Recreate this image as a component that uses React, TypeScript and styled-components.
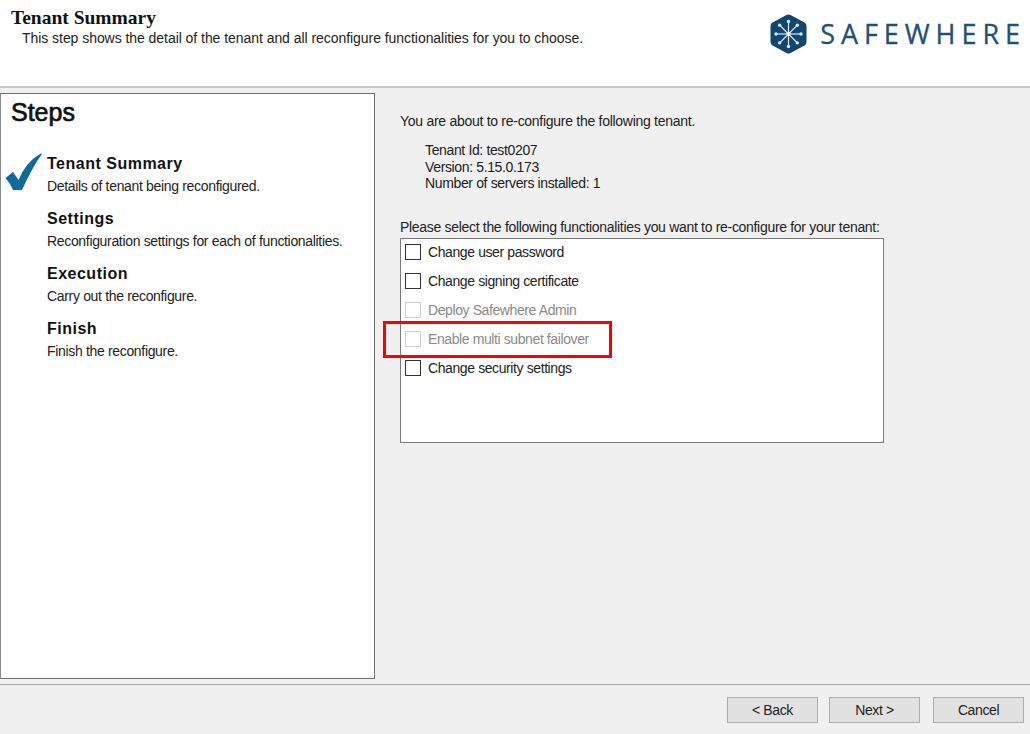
import React from "react";
import styled, { createGlobalStyle } from "styled-components";

const Global = createGlobalStyle`
  html, body { margin: 0; padding: 0; background: #f0f0f0; }
  body { font-family: "Liberation Sans", Arial, sans-serif; color: #1a1a1a; }
`;
const Page = styled.div`
  width: 1030px; height: 734px; display: flex; flex-direction: column; overflow: hidden; background: #f0f0f0;
`;
const Header = styled.header`
  height: 88px; flex: none; box-sizing: border-box; background: #fff; border-bottom: 2px solid #c8c8c8;
  display: flex; justify-content: space-between; padding: 8px 4px 0 11px;
`;
const HeaderText = styled.div`display: flex; flex-direction: column;`;
const HeaderTitle = styled.h1`
  margin: 0; font: bold 19.5px/19px "Liberation Serif", serif; color: #111; letter-spacing: 0;
`;
const HeaderSub = styled.p`
  margin: 3px 0 0 11px; font-size: 14px; line-height: 16px; color: #222; letter-spacing: -0.05px;
`;
const Logo = styled.div`display: flex; align-items: center; gap: 13px; height: 40px; margin-top: 6px;`;
const LogoText = styled.span`
  font-family: "Open Sans", sans-serif; font-size: 27px; font-weight: 500; line-height: 40px; letter-spacing: 5.95px; color: #1f5078;
  -webkit-text-stroke: 0.3px #1f5078;
`;
const Main = styled.main`flex: 1; display: flex; padding-top: 5px; min-height: 0;`;
const Steps = styled.aside`
  width: 375px; height: 586px; flex: none; box-sizing: border-box; background: #fff; border: 1px solid #6e6e6e;
  border-left-color: #8a8a8a; padding: 4px 0 0 10px;
`;
const StepsTitle = styled.h2`
  margin: 0 0 26px; font-size: 25px; line-height: 29px; font-weight: 400; color: #111;
  -webkit-text-stroke: 0.7px #111;
`;
const StepItem = styled.div`position: relative; height: 55px; padding-left: 36px;`;
const Check = styled.svg`position: absolute; left: -6px; top: 0;`;
const StepName = styled.div`
  font-size: 16px; line-height: 18px; font-weight: bold; color: #111; height: 25px; padding-top: 2px;
  box-sizing: border-box; letter-spacing: 0.5px;
`;
const StepDesc = styled.div`font-size: 14px; line-height: 17px; letter-spacing: -0.33px; color: #222;`;
const Content = styled.section`flex: 1; padding: 20px 0 0 25px;`;
const Intro = styled.p`margin: 0; font-size: 14px; line-height: 16px; letter-spacing: -0.28px; color: #222;`;
const Facts = styled.div`
  margin: 13px 0 0 25px; font-size: 14px; line-height: 16.5px; letter-spacing: -0.36px; color: #222;
`;
const Prompt = styled.p`margin: 27px 0 0; font-size: 14px; line-height: 16px; letter-spacing: -0.31px; color: #222;`;
const List = styled.div`
  position: relative; width: 484px; height: 205px; margin-top: 3px; box-sizing: border-box;
  background: #fff; border: 1px solid #7a7a7a; padding: 0 0 0 4px;
  display: flex; flex-direction: column; gap: 2px;
`;
const Row = styled.div<{ $off?: boolean }>`
  display: flex; align-items: center; gap: 7px; height: 27px; flex: none;
  font-size: 14px; letter-spacing: -0.4px;
  color: ${p => (p.$off ? "#8a8a8a" : "#222")};
`;
const Box = styled.span<{ $off?: boolean }>`
  width: 16px; height: 16px; flex: none; box-sizing: border-box;
  background: #fff; border: 1px solid ${p => (p.$off ? "#d0d0d0" : "#333")};
`;
const Highlight = styled.div`
  position: absolute; left: -18px; top: 82px; width: 229px; height: 37px; box-sizing: border-box;
  border: 3px solid #ff0000;
`;
const Footer = styled.footer`
  height: 50px; flex: none; box-sizing: border-box; border-top: 1px solid #a8a8a8;
  display: flex; justify-content: flex-end; padding: 12px 6px 0 0; margin-top: 5px;
`;
const Button = styled.button<{ $gap?: number }>`
  width: 91px; height: 26px; box-sizing: border-box; padding: 0; margin-left: ${p => p.$gap ?? 0}px;
  background: #e1e1e1; border: 1px solid #adadad; color: #222;
  font-family: "Liberation Sans", sans-serif; font-size: 14px; letter-spacing: -0.4px;
`;

const items = [
  { label: "Change user password" },
  { label: "Change signing certificate" },
  { label: "Deploy Safewhere Admin", off: true },
  { label: "Enable multi subnet failover", off: true },
  { label: "Change security settings" },
];
const steps = [
  { name: "Tenant Summary", desc: "Details of tenant being reconfigured.", done: true },
  { name: "Settings", desc: "Reconfiguration settings for each of functionalities." },
  { name: "Execution", desc: "Carry out the reconfigure." },
  { name: "Finish", desc: "Finish the reconfigure." },
];

const spokes = [0, 45, 90, 135, 180, 225, 270, 315];

export default function App() {
  return (
    <Page>
      <Global />
      <Header>
        <HeaderText>
          <HeaderTitle>Tenant Summary</HeaderTitle>
          <HeaderSub>This step shows the detail of the tenant and all reconfigure functionalities for you to choose.</HeaderSub>
        </HeaderText>
        <Logo>
          <svg width="37" height="40" viewBox="0 0 37 40" aria-hidden="true">
            <path d="M16.5 1 Q18.5 0 20.5 1 L34.5 8.5 Q36.5 9.6 36.5 12 V28 Q36.5 30.4 34.5 31.5 L20.5 39 Q18.5 40 16.5 39 L2.5 31.5 Q0.5 30.4 0.5 28 V12 Q0.5 9.6 2.5 8.5 Z" fill="#10466f" />
            {spokes.map(a => {
              const r = (a * Math.PI) / 180;
              const x = 18.5 + 12.5 * Math.cos(r);
              const y = 20 + 12.5 * Math.sin(r);
              return (
                <g key={a}>
                  <line x1="18.5" y1="20" x2={x} y2={y} stroke="#dce8f1" strokeWidth="1.2" />
                  <circle cx={x} cy={y} r="1.7" fill="#dce8f1" />
                </g>
              );
            })}
            <circle cx="18.5" cy="20" r="2" fill="#fff" />
          </svg>
          <LogoText>SAFEWHERE</LogoText>
        </Logo>
      </Header>
      <Main>
        <Steps>
          <StepsTitle>Steps</StepsTitle>
          {steps.map(s => (
            <StepItem key={s.name}>
              {s.done && (
                <Check width="38" height="38" viewBox="0 0 38 38" aria-hidden="true">
                  <path d="M0.5 25 L8 19 L13.5 27 Q21 9 35 1 Q36.5 0 37 1 Q28 13 17 37 L8 37 Q5 30 0.5 25 Z" fill="#0f6a9c" />
                </Check>
              )}
              <StepName>{s.name}</StepName>
              <StepDesc>{s.desc}</StepDesc>
            </StepItem>
          ))}
        </Steps>
        <Content>
          <Intro>You are about to re-configure the following tenant.</Intro>
          <Facts>
            <div>Tenant Id: test0207</div>
            <div>Version: 5.15.0.173</div>
            <div>Number of servers installed: 1</div>
          </Facts>
          <Prompt>Please select the following functionalities you want to re-configure for your tenant:</Prompt>
          <List>
            {items.map(i => (
              <Row key={i.label} $off={i.off}>
                <Box $off={i.off} />
                {i.label}
              </Row>
            ))}
            <Highlight />
          </List>
        </Content>
      </Main>
      <Footer>
        <Button>&lt; Back</Button>
        <Button $gap={11}>Next &gt;</Button>
        <Button $gap={13}>Cancel</Button>
      </Footer>
    </Page>
  );
}
